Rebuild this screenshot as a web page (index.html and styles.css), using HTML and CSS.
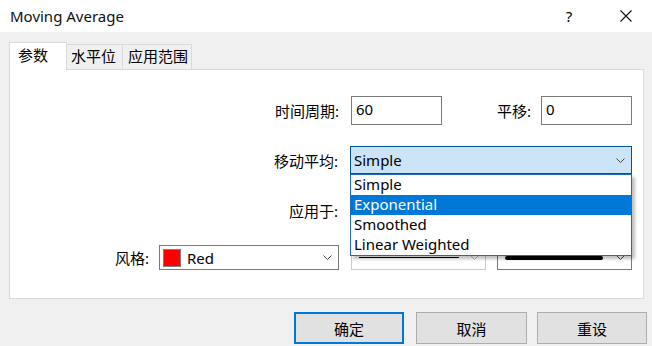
FILE: index.html
```html
<!DOCTYPE html>
<html lang="zh-CN">
<head>
    <meta charset="UTF-8">
    <title>Moving Average</title>
    <link rel="stylesheet" href="styles.css">
</head>
<body>

<div class="window">
    <!-- Barre de titre -->
    <div class="titlebar">
        <span class="title">Moving Average</span>
        <span class="help">?</span>
        <span class="close">
            <svg width="12" height="12" viewBox="0 0 12 12"><path d="M0.5 0.5 L11.5 11.5 M11.5 0.5 L0.5 11.5" stroke="#111" stroke-width="1.1" fill="none"/></svg>
        </span>
    </div>

    <div class="tabs">
        <div class="tab active">参数</div>
        <div class="tab tab-level">水平位</div>
        <div class="tab tab-range">应用范围</div>
    </div>

    <div class="panel">
        <div class="row row-period">
            <span class="label">时间周期:</span>
            <div class="field field-short">60</div>
            <span class="label label-shift">平移:</span>
            <div class="field field-short">0</div>
        </div>

        <div class="row row-method">
            <span class="label">移动平均:</span>
            <div class="combo-wrap">
                <div class="combo combo-wide combo-open">
                    <span class="combo-text">Simple</span>
                    <svg class="chevron" width="9" height="5" viewBox="0 0 9 5"><path d="M0.5 0.5 L4.5 4.5 L8.5 0.5" stroke="#444" fill="none"/></svg>
                </div>
                <ul class="dropdown">
                    <li>Simple</li>
                    <li class="selected">Exponential</li>
                    <li>Smoothed</li>
                    <li>Linear Weighted</li>
                </ul>
            </div>
        </div>

        <div class="row row-apply">
            <span class="label">应用于:</span>
            <!-- caché sous la liste ouverte -->
            <div class="combo combo-wide">
                <span class="combo-text"></span>
            </div>
        </div>

        <div class="row row-style">
            <span class="label">风格:</span>
            <div class="combo combo-color">
                <span class="swatch"></span>
                <span class="combo-text">Red</span>
                <svg class="chevron" width="9" height="5" viewBox="0 0 9 5"><path d="M0.5 0.5 L4.5 4.5 L8.5 0.5" stroke="#444" fill="none"/></svg>
            </div>
            <div class="combo combo-line disabled">
                <span class="line line-thin"></span>
                <svg class="chevron" width="9" height="5" viewBox="0 0 9 5"><path d="M0.5 0.5 L4.5 4.5 L8.5 0.5" stroke="#bbb" fill="none"/></svg>
            </div>
            <div class="combo combo-line">
                <span class="line line-thick"></span>
                <svg class="chevron" width="9" height="5" viewBox="0 0 9 5"><path d="M0.5 0.5 L4.5 4.5 L8.5 0.5" stroke="#444" fill="none"/></svg>
            </div>
        </div>
    </div>

    <div class="buttons">
        <button class="btn btn-default">确定</button>
        <button class="btn btn-cancel">取消</button>
        <button class="btn">重设</button>
    </div>
</div>

</body>
</html>
```

FILE: styles.css
```css
/* Fenêtre générale */
body {
    margin: 0;
    background-color: #f0f0f0;
    font-family: 'Segoe UI', 'Noto Sans', 'Noto Sans CJK SC', sans-serif;
    font-size: 15px;
    color: #000;
}

.window {
    width: 652px;
    height: 346px;
    overflow: hidden;
}

/* Barre de titre */
.titlebar {
    height: 32px;
    background-color: #fff;
    display: flex;
    align-items: center;
}

.title {
    padding-left: 10px;
    flex: 1;
    color: #111;
}

.help,
.close {
    width: 46px;
    height: 32px;
    display: flex;
    align-items: center;
    justify-content: center;
}

.help {
    margin-right: 11px;
    font-size: 15px;
}

.close {
    margin-right: 3px;
}

/* Onglets */
.tabs {
    display: flex;
    align-items: flex-end;
    padding-left: 9px;
    margin-top: 10px;
    height: 27px;
    position: relative;
    z-index: 1;
}

.tab {
    box-sizing: border-box;
    height: 25px;
    line-height: 22px;
    border: 1px solid #d9d9d9;
    border-bottom: none;
    background-color: #f0f0f0;
    margin-left: -1px;
    white-space: nowrap;
}

.tab.active {
    height: 28px;
    margin-bottom: -1px;
    margin-left: 0;
    width: 58px;
    padding-left: 8px;
    line-height: 24px;
    background-color: #fff;
}

.tab-level {
    width: 57px;
    padding-left: 4px;
}

.tab-range {
    width: 70px;
    padding-left: 5px;
}

/* Panneau principal */
.panel {
    box-sizing: border-box;
    margin: 0 8px 0 9px;
    height: 230px;
    background-color: #fff;
    border: 1px solid #d9d9d9;
    padding: 26px 11px 0 0;
}

.row {
    display: flex;
    justify-content: flex-end;
    align-items: center;
}

.label {
    margin-right: 12px;
    white-space: nowrap;
}

.row-period {
    height: 29px;
}

.row-method {
    height: 28px;
    margin-top: 21px;
}

.row-apply {
    height: 28px;
    margin-top: 22px;
}

.row-style {
    height: 25px;
    margin-top: 21px;
}

.row-style .label {
    margin-right: 10px;
}

.label-shift {
    margin-left: 55px;
    margin-right: 10px;
}

/* Champs de saisie */
.field {
    box-sizing: border-box;
    height: 29px;
    border: 1px solid #7a7a7a;
    padding-left: 4px;
    line-height: 25px;
}

.field-short {
    width: 91px;
}

/* Listes déroulantes */
.combo {
    box-sizing: border-box;
    height: 28px;
    border: 1px solid #7a7a7a;
    background-color: #fff;
    display: flex;
    align-items: center;
    padding-left: 3px;
    position: relative;
}

.combo-wide {
    width: 282px;
}

.combo-wrap {
    position: relative;
}

.combo-open {
    background-color: #cce4f7;
    border-color: #005499;
}

.combo-text {
    flex: 1;
}

.chevron {
    margin-right: 6px;
}

.dropdown {
    position: absolute;
    top: 100%;
    left: 0;
    width: 282px;
    box-sizing: border-box;
    margin: 0;
    padding: 0;
    list-style: none;
    background-color: #fff;
    border: 1px solid #1f6eb3;
    box-shadow: 3px 3px 3px rgba(0, 0, 0, 0.25);
    z-index: 2;
}

.dropdown li {
    height: 20px;
    line-height: 19px;
    padding-left: 3px;
}

.dropdown li.selected {
    background-color: #0078d7;
    color: #fff;
}

/* Ligne du style */
.combo-color {
    width: 180px;
    height: 25px;
    padding-left: 3px;
}

.swatch {
    width: 16px;
    height: 16px;
    background-color: #ff0000;
    border: 1px solid #808080;
    margin-right: 6px;
}

.combo-line {
    width: 135px;
    height: 25px;
    padding-left: 7px;
}

.combo-line.disabled {
    border-color: #cccccc;
    margin-left: 12px;
}

.combo-line + .combo-line {
    margin-left: 11px;
}

.line {
    height: 1px;
    width: 100px;
    background-color: #000;
    margin-right: auto;
}

.line-thick {
    height: 4px;
    width: 98px;
    border-radius: 2px;
}

/* Boutons du bas */
.buttons {
    display: flex;
    justify-content: flex-end;
    margin-top: 13px;
    padding-right: 5px;
}

.btn {
    box-sizing: border-box;
    width: 110px;
    height: 32px;
    background-color: #e1e1e1;
    border: 1px solid #adadad;
    font-family: 'Segoe UI', 'Noto Sans', 'Noto Sans CJK SC', sans-serif;
    font-size: 15px;
    padding: 0;
}

.btn-default {
    border: 2px solid #0078d7;
}

.btn-cancel {
    width: 111px;
    margin-left: 12px;
    margin-right: 10px;
}
```
